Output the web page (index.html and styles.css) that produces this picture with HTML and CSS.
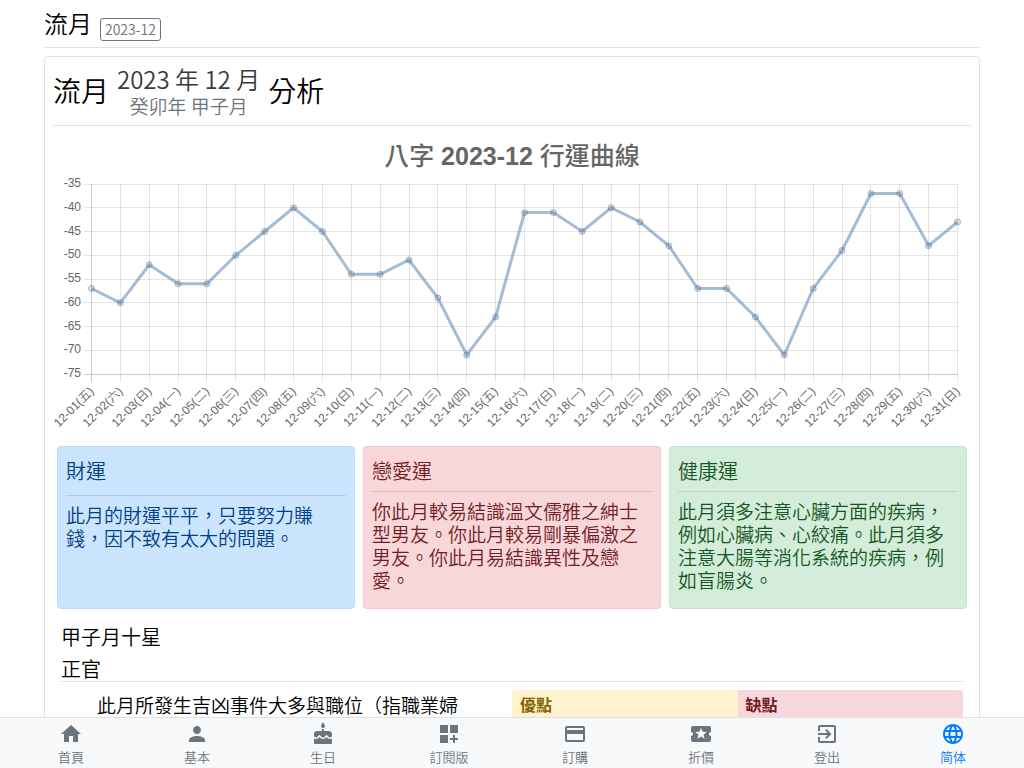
FILE: index.html
```html
<!DOCTYPE html>
<html lang="zh-Hant">
<head>
<meta charset="utf-8">
<meta name="viewport" content="width=device-width, initial-scale=1">
<title>流月 2023-12</title>
<link rel="stylesheet" href="styles.css">
</head>
<body>
<main class="page">
  <header class="page-head">
    <h1 class="page-title">流月</h1>
    <button class="month-btn" type="button">2023-12</button>
  </header>
  <article class="card">
    <header class="card-head">
      <span class="card-word">流月</span>
      <span class="period"><span class="period-main">2023 年 12 月</span><small class="period-sub">癸卯年 甲子月</small></span>
      <span class="card-word">分析</span>
    </header>
    <svg class="chart" id="chart" viewBox="0 0 918 312" role="img" aria-label="八字 2023-12 行運曲線"></svg>
    <section class="fortunes">
      <div class="fortune wealth">
        <h2 class="fortune-title">財運</h2>
        <hr class="rule">
        <p class="fortune-text">此月的財運平平，只要努力賺錢，因不致有太大的問題。</p>
      </div>
      <div class="fortune love">
        <h2 class="fortune-title">戀愛運</h2>
        <hr class="rule">
        <p class="fortune-text">你此月較易結識溫文儒雅之紳士型男友。你此月較易剛暴偏激之男友。你此月易結識異性及戀愛。</p>
      </div>
      <div class="fortune health">
        <h2 class="fortune-title">健康運</h2>
        <hr class="rule">
        <p class="fortune-text">此月須多注意心臟方面的疾病，例如心臟病、心絞痛。此月須多注意大腸等消化系統的疾病，例如盲腸炎。</p>
      </div>
    </section>
    <section class="stars">
      <h2 class="stars-title">甲子月十星</h2>
      <h3 class="stars-name">正官</h3>
      <div class="stars-body">
        <p class="stars-text">此月所發生吉凶事件大多與職位（指職業婦</p>
        <table class="traits">
          <thead><tr><th class="pro" scope="col">優點</th><th class="con" scope="col">缺點</th></tr></thead>
        </table>
      </div>
    </section>
  </article>
</main>
<nav class="tabbar">
  <a class="tab" href="#home"><svg class="icon" viewBox="0 0 24 24"><path d="M10 20v-6h4v6h5v-8h3L12 3 2 12h3v8z"/></svg>首頁</a>
  <a class="tab" href="#basic"><svg class="icon" viewBox="0 0 24 24"><path d="M12 12c2.21 0 4-1.79 4-4s-1.79-4-4-4-4 1.79-4 4 1.79 4 4 4zm0 2c-2.67 0-8 1.34-8 4v2h16v-2c0-2.66-5.33-4-8-4z"/></svg>基本</a>
  <a class="tab" href="#birthday"><svg class="icon" viewBox="0 0 24 24"><path d="M12 6c1.11 0 2-.9 2-2 0-.38-.1-.73-.29-1.03L12 0l-1.71 2.97c-.19.3-.29.65-.29 1.03 0 1.1.9 2 2 2zm4.6 9.99l-1.07-1.07-1.08 1.07c-1.3 1.3-3.58 1.31-4.89 0l-1.07-1.07-1.09 1.07C6.75 16.64 5.88 17 4.96 17c-.73 0-1.4-.23-1.96-.61V21c0 .55.45 1 1 1h16c.55 0 1-.45 1-1v-4.61c-.56.38-1.23.61-1.96.61-.92 0-1.79-.36-2.44-1.01zM18 9h-5V7h-2v2H6c-1.66 0-3 1.34-3 3v1.54c0 1.08.88 1.96 1.96 1.96.52 0 1.02-.2 1.38-.57l2.14-2.13 2.13 2.13c.74.74 2.03.74 2.77 0l2.14-2.13 2.13 2.13c.37.37.86.57 1.38.57 1.08 0 1.96-.88 1.96-1.96V12C21 10.34 19.66 9 18 9z"/></svg>生日</a>
  <a class="tab" href="#subscribed"><svg class="icon" viewBox="0 0 24 24"><path d="M3 3h8v8H3zM13 3h8v8h-8zM3 13h8v8H3zM18 13h-2v3h-3v2h3v3h2v-3h3v-2h-3z"/></svg>訂閱版</a>
  <a class="tab" href="#order"><svg class="icon" viewBox="0 0 24 24"><path d="M20 4H4c-1.11 0-1.99.89-1.99 2L2 18c0 1.11.89 2 2 2h16c1.11 0 2-.89 2-2V6c0-1.11-.89-2-2-2zm0 14H4v-6h16v6zm0-10H4V6h16v2z"/></svg>訂購</a>
  <a class="tab" href="#discount"><svg class="icon" viewBox="0 0 24 24"><path d="M20 12c0-1.1.9-2 2-2V6c0-1.1-.9-2-2-2H4c-1.1 0-1.99.9-1.99 2v4c1.1 0 1.99.9 1.99 2s-.89 2-2 2v4c0 1.1.9 2 2 2h16c1.1 0 2-.9 2-2v-4c-1.1 0-2-.9-2-2zm-4.42 4.8L12 14.5l-3.58 2.3 1.08-4.12-3.29-2.69 4.24-.25L12 5.8l1.54 3.95 4.24.25-3.29 2.69 1.09 4.11z"/></svg>折價</a>
  <a class="tab" href="#logout"><svg class="icon" viewBox="0 0 24 24"><path d="M10.09 15.59L11.5 17l5-5-5-5-1.41 1.41L12.67 11H3v2h9.67l-2.58 2.59zM19 3H5c-1.11 0-2 .9-2 2v4h2V5h14v14H5v-4H3v4c0 1.1.89 2 2 2h14c1.1 0 2-.9 2-2V5c0-1.1-.9-2-2-2z"/></svg>登出</a>
  <a class="tab tab-lang" lang="zh-Hans" href="#zh-hans"><svg class="icon" viewBox="0 0 24 24"><path d="M11.99 2C6.47 2 2 6.48 2 12s4.47 10 9.99 10C17.52 22 22 17.52 22 12S17.52 2 11.99 2zm6.93 6h-2.95c-.32-1.25-.78-2.45-1.38-3.56 1.84.63 3.37 1.91 4.33 3.56zM12 4.04c.83 1.2 1.48 2.53 1.91 3.96h-3.82c.43-1.43 1.08-2.76 1.91-3.96zM4.26 14C4.1 13.36 4 12.69 4 12s.1-1.36.26-2h3.38c-.08.66-.14 1.32-.14 2s.06 1.34.14 2H4.26zm.82 2h2.95c.32 1.25.78 2.45 1.38 3.56-1.84-.63-3.37-1.9-4.33-3.56zm2.95-8H5.08c.96-1.66 2.49-2.93 4.33-3.56C8.81 5.55 8.35 6.75 8.03 8zM12 19.96c-.83-1.2-1.48-2.53-1.91-3.96h3.82c-.43 1.43-1.08 2.76-1.91 3.96zM14.34 14H9.66c-.09-.66-.16-1.32-.16-2s.07-1.35.16-2h4.68c.09.65.16 1.32.16 2s-.07 1.34-.16 2zm.25 5.56c.6-1.11 1.06-2.31 1.38-3.56h2.95c-.96 1.65-2.49 2.93-4.33 3.56zM16.36 14c.08-.66.14-1.32.14-2s-.06-1.34-.14-2h3.38c.16.64.26 1.31.26 2s-.1 1.36-.26 2h-3.38z"/></svg>简体</a>
</nav>
<script src="chart.js"></script>
</body>
</html>
```

FILE: styles.css
```css
* { box-sizing: border-box; }

body {
  margin: 0;
  background: #fff;
  color: #000;
  font-family: "Noto Sans CJK TC", sans-serif;
  font-weight: 350;
  font-size: 19px;
  line-height: 23px;
}

h1, h2, h3, p { margin: 0; font-weight: inherit; }

.page { padding: 0 44px; }

.page-head {
  display: flex;
  align-items: center;
  gap: 8px;
  height: 48px;
  border-bottom: 1px solid #dee2e6;
}

.page-title { font-size: 24px; line-height: 28px; padding-bottom: 2px; }

.month-btn {
  margin-top: 12px;
  padding: 0 4px;
  border: 1px solid #6c757d;
  border-radius: 3px;
  background: none;
  color: #6c757d;
  font: inherit;
  font-size: 14px;
  line-height: 21px;
}

.card {
  margin-top: 8px;
  padding: 8px 8px 44px;
  border: 1px solid #dee2e6;
  border-radius: 4px;
}

.card-head {
  display: flex;
  align-items: center;
  gap: 8px;
  height: 61px;
  padding-bottom: 10px;
  border-bottom: 1px solid #dee2e6;
}

.card-word { font-size: 28px; line-height: 32px; }

.period { display: flex; flex-direction: column; align-items: center; }
.period-main { color: #343a40; font-size: 24px; line-height: 30px; }
.period-sub { color: #6c757d; font-size: 19px; line-height: 23px; }

.chart { display: block; width: 100%; height: auto; overflow: visible; }
.chart text { font-family: "Liberation Sans", "Noto Sans CJK TC", sans-serif; font-size: 12px; font-weight: 350; fill: #666; }
.chart .chart-title { font-size: 25px; font-weight: 700; }
.chart-title .han { font-weight: 500; }
.grid { stroke: #000; stroke-opacity: 0.1; shape-rendering: crispEdges; }
.axis { stroke-opacity: 0.2; }
.curve { fill: none; stroke: #4a7bab; stroke-opacity: 0.5; stroke-width: 3; }
.dot { fill: #000; fill-opacity: 0.1; stroke: #4a7bab; stroke-opacity: 0.5; }

.fortunes {
  display: grid;
  grid-template-columns: repeat(3, 1fr);
  gap: 8px;
  padding: 8px 4px 0;
}

.fortune {
  min-height: 163px;
  padding: 12px 8px 16px;
  border: 1px solid;
  border-radius: 4px;
}

.fortune-title { font-size: 20px; line-height: 24px; }
.rule { height: 1px; margin: 8px 0 7px; border: 0; background: currentColor; }
.wealth .rule { margin-top: 12px; }

.wealth { color: #004085; background: #cce5ff; border-color: #b8daff; }
.wealth .rule { background: #9fcdff; }
.love { color: #721c24; background: #f8d7da; border-color: #f5c6cb; }
.love .rule { background: #f1b0b7; }
.health { color: #155724; background: #d4edda; border-color: #c3e6cb; }
.health .rule { background: #b1dfbb; }

.stars { padding: 16px 8px 0; }
.stars-title { font-size: 20px; line-height: 24px; margin-bottom: 8px; }
.stars-name { font-size: 20px; line-height: 24px; border-bottom: 1px solid #dee2e6; }

.stars-body {
  display: grid;
  grid-template-columns: 1fr 1fr;
  padding-top: 8px;
}

.stars-text { padding: 3px 24px 0 36px; }

.traits {
  width: 100%;
  border-collapse: separate;
  border-spacing: 0;
  table-layout: fixed;
}
.traits th { padding: 4px 8px; font-size: 16px; font-weight: 700; line-height: 20px; text-align: left; }
.pro { color: #856404; background: #fff3cd; border-top-left-radius: 4px; }
.con { color: #721c24; background: #f8d7da; border-top-right-radius: 4px; }

.tabbar {
  position: fixed;
  left: 0;
  right: 0;
  bottom: 0;
  display: flex;
  padding: 4px 8px 0;
  height: 51px;
  background: #f8f9fa;
  border-top: 1px solid #dee2e6;
}

.tab {
  flex: 1;
  display: flex;
  flex-direction: column;
  align-items: center;
  gap: 2px;
  color: #6c757d;
  font-size: 13px;
  line-height: 18px;
  text-decoration: none;
}

.tab-lang { color: #007bff; font-family: "Noto Sans CJK SC", sans-serif; }

.icon { width: 24px; height: 24px; fill: currentColor; }
```

FILE: chart.js
```js
const values = [-57, -60, -52, -56, -56, -50, -45, -40, -45, -54, -54, -51, -59, -71, -63, -41,
  -41, -45, -40, -43, -48, -57, -57, -63, -71, -57, -49, -37, -37, -48, -43];
const weekdays = '日一二三四五六';
const left = 38.5, right = 904.5, top_ = 58, bottom = 248;
const step = (right - left) / (values.length - 1);
const x = i => left + i * step;
const y = v => top_ + (-35 - v) * (bottom - top_) / 40;

let out = '<text class="chart-title" x="459" y="39" text-anchor="middle"><tspan class="han">八字</tspan> 2023-12 <tspan class="han">行運曲線</tspan></text>';
for (let v = -35; v >= -75; v -= 5) {
  const cls = v === -75 ? 'grid axis' : 'grid';
  out += `<line class="${cls}" x1="${left - 8}" x2="${right}" y1="${y(v)}" y2="${y(v)}"/>`;
  out += `<text x="28" y="${y(v) + 3}" text-anchor="end">${v}</text>`;
}
values.forEach((v, i) => {
  const cls = i === 0 ? 'grid axis' : 'grid';
  const day = String(i + 1).padStart(2, '0');
  out += `<line class="${cls}" x1="${x(i)}" x2="${x(i)}" y1="${top_}" y2="${bottom + 8}"/>`;
  out += `<text transform="translate(${x(i) + 3} ${bottom + 18}) rotate(-45)" text-anchor="end">12-${day}(${weekdays[(i + 5) % 7]})</text>`;
});
out += `<polyline class="curve" points="${values.map((v, i) => x(i) + ',' + y(v)).join(' ')}"/>`;
values.forEach((v, i) => { out += `<circle class="dot" cx="${x(i)}" cy="${y(v)}" r="3"/>`; });
document.getElementById('chart').innerHTML = out;
```
